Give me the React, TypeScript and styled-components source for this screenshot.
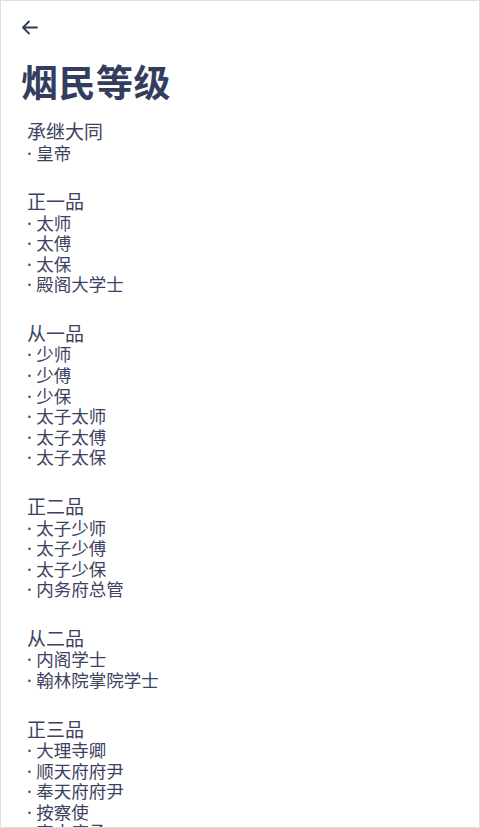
import { FC } from 'react';
import styled, { createGlobalStyle } from 'styled-components';

const GlobalStyle = createGlobalStyle`
  html, body {
    margin: 0;
    padding: 0;
    background: #ffffff;
  }
  body {
    font-family: 'Noto Sans', 'Noto Sans CJK SC', sans-serif;
  }
`;

const Page = styled.div`
  box-sizing: border-box;
  width: 480px;
  height: 828px;
  overflow: hidden;
  border: 1px solid #dedede;
  background: #fff;
`;

const TopBar = styled.div`
  height: 52px;
  display: flex;
  align-items: center;
  padding-left: 20px;
`;

const BackButton = styled.button`
  display: flex;
  align-items: center;
  justify-content: center;
  padding: 0;
  border: none;
  background: none;
  color: #2f3a5a;
  cursor: pointer;
`;

const Title = styled.h1`
  margin: 5px 0 0 20px;
  font-family: 'Noto Sans CJK SC', sans-serif;
  font-size: 37px;
  line-height: 46px;
  font-weight: 700;
  color: #333e5f;
  letter-spacing: 0.5px;
`;

const List = styled.div`
  display: flex;
  flex-direction: column;
  gap: 29px;
  padding: 18px 0 0 26px;
`;

const Group = styled.section`
  display: flex;
  flex-direction: column;
`;

const GroupTitle = styled.div`
  font-size: 19px;
  line-height: 21.5px;
  margin-bottom: -1px;
  color: #3d4260;
`;

const Item = styled.div`
  font-size: 17.5px;
  line-height: 20.6px;
  color: #3d4260;
`;

const ranks = [
  { title: '承继大同', items: ['皇帝'] },
  { title: '正一品', items: ['太师', '太傅', '太保', '殿阁大学士'] },
  {
    title: '从一品',
    items: ['少师', '少傅', '少保', '太子太师', '太子太傅', '太子太保'],
  },
  { title: '正二品', items: ['太子少师', '太子少傅', '太子少保', '内务府总管'] },
  { title: '从二品', items: ['内阁学士', '翰林院掌院学士'] },
  {
    title: '正三品',
    items: ['大理寺卿', '顺天府府尹', '奉天府府尹', '按察使', '宗人府丞'],
  },
];

const BackIcon = () => (
  <svg width="17" height="15" viewBox="0 0 17 15" fill="none">
    <path
      d="M16 7.5H2M8 1.5L2 7.5L8 13.5"
      stroke="currentColor"
      strokeWidth="1.8"
      strokeLinecap="round"
      strokeLinejoin="round"
    />
  </svg>
);

const App: FC = () => (
  <>
    <GlobalStyle />
    <Page>
      <TopBar>
        <BackButton aria-label="返回">
          <BackIcon />
        </BackButton>
      </TopBar>
      <Title>烟民等级</Title>
      <List>
        {ranks.map(rank => (
          <Group key={rank.title}>
            <GroupTitle>{rank.title}</GroupTitle>
            {rank.items.map(item => (
              <Item key={item}>· {item}</Item>
            ))}
          </Group>
        ))}
      </List>
    </Page>
  </>
);

export default App;
